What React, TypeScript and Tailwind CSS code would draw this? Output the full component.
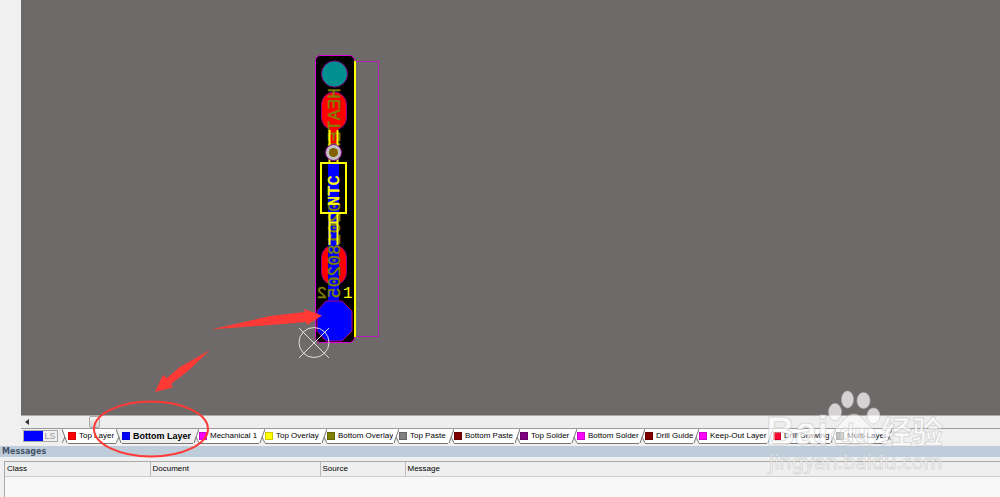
import { useState } from "react";

const layers = [
  { name: "Top Layer", color: "bg-[#ff0000]", width: "w-[54px]" },
  { name: "Bottom Layer", color: "bg-[#0000ff]", width: "w-[77px]" },
  { name: "Mechanical 1", color: "bg-[#ff00ff]", width: "w-[66px]" },
  { name: "Top Overlay", color: "bg-[#ffff00]", width: "w-[62px]" },
  { name: "Bottom Overlay", color: "bg-[#808000]", width: "w-[72px]" },
  { name: "Top Paste", color: "bg-[#808080]", width: "w-[55px]" },
  { name: "Bottom Paste", color: "bg-[#800000]", width: "w-[66px]" },
  { name: "Top Solder", color: "bg-[#800080]", width: "w-[57px]" },
  { name: "Bottom Solder", color: "bg-[#ff00ff]", width: "w-[68px]" },
  { name: "Drill Guide", color: "bg-[#800000]", width: "w-[54px]" },
  { name: "Keep-Out Layer", color: "bg-[#ff00ff]", width: "w-[74px]" },
  { name: "Drill Drawing", color: "bg-[#ff0033]", width: "w-[63px]" },
  { name: "Multi-Layer", color: "bg-[#808080]", width: "w-[56px]" },
];

function TabEdge({ left, right, slant }: { left: string; right: string; slant: "rise" | "fall" }) {
  return (
    <svg width="6" height="15" viewBox="0 0 6 15" className="shrink-0" aria-hidden="true">
      {slant === "rise" ? (
        <>
          <path d="M0 0H6L1 14H0Z" fill={left} />
          <path d="M6 0V14L3 8Z" fill={right} />
          <path d="M6 0L1 14M3 8L6 14" fill="none" stroke="#777" />
        </>
      ) : (
        <>
          <path d="M0 0L3 8L0 14Z" fill={left} />
          <path d="M0 0H6V14H5Z" fill={right} />
          <path d="M0 0L5 14M3 8L0 14" fill="none" stroke="#777" />
        </>
      )}
    </svg>
  );
}

function Board() {
  return (
    <svg
      width="120"
      height="320"
      viewBox="290 45 120 320"
      className="absolute top-[45px] left-[269px]"
      role="img"
      aria-label="Circuit board"
    >
      <path d="M355 61.500H378.500V336.500H355" fill="none" stroke="#b51fb8" />
      <rect x="315.500" y="55.500" width="39" height="287" rx="5" fill="#000" stroke="#e000e0" />
      <circle cx="334.500" cy="74" r="13" fill="#009090" stroke="#800080" />
      <rect x="321.500" y="92" width="25" height="38" rx="12.500" fill="#f00" stroke="#900090" />
      <rect x="321.500" y="245" width="25" height="40" rx="12.500" fill="#f00" stroke="#900090" />
      <path d="M329 128H338V150H329Z" fill="#f00" />
      <path d="M328 162H339V303H328Z" fill="#00f" />
      <path d="M326 301H342L352 311V331L342 341H326L317 331V311Z" fill="#00f" stroke="#b00070" />
      {/* bottom side silkscreen reads mirrored */}
      <g fill="#808000" stroke="#808000" strokeWidth="0.400" fontFamily="Liberation Mono, monospace">
        <text transform="matrix(0 1 1 0 340 88)" fontSize="18">HEATER</text>
        <text transform="matrix(0 1 1 0 340 201)" fontSize="18">020180205</text>
        <text transform="matrix(-1 0 0 1 327 298)" fontSize="17">2</text>
      </g>
      <path d="M329.500 130V162M337.500 130V162M329.500 214V245M337.500 214V245M329 222.500H338" stroke="#ff0" strokeWidth="2" />
      <rect x="321" y="163" width="25" height="50" fill="none" stroke="#ff0" strokeWidth="2" />
      <text
        transform="rotate(-90 339 206)"
        x="339"
        y="206"
        fontSize="17"
        fontFamily="Liberation Mono, monospace"
        fill="#ff0"
        stroke="#ff0"
        strokeWidth="0.500"
      >
        NTC
      </text>
      <text x="343" y="298" fontSize="16" fontFamily="Liberation Mono, monospace" fill="#ff0">1</text>
      <path d="M355 61V337" stroke="#ff0" strokeWidth="2" />
      <circle cx="333.500" cy="152.500" r="8" fill="#c0c0c0" stroke="#900090" />
      <circle cx="333.500" cy="152.500" r="4.500" fill="#806000" />
      <g fill="none" stroke="#e0e0e0">
        <circle cx="314" cy="342.500" r="15" />
        <path d="M299 328L329 358M329 328L299 358" />
      </g>
    </svg>
  );
}

function Annotations() {
  return (
    <svg
      width="250"
      height="170"
      viewBox="80 300 250 170"
      className="pointer-events-none absolute top-[300px] left-[80px]"
      aria-hidden="true"
    >
      <path d="M211 329.500L270 316L305 312L304 309L322 315.500L307 325L306 322L270 325Z" fill="#ff3a36" />
      <path d="M210 350L180 367L167 378L163 375L155 392L173 387.500L171 384L188 371Z" fill="#ff3a36" />
      <ellipse cx="151" cy="429" rx="57" ry="27.500" fill="none" stroke="#ff3a36" strokeWidth="2" />
    </svg>
  );
}

function Watermark() {
  return (
    <svg
      width="200"
      height="100"
      viewBox="760 380 200 100"
      className="pointer-events-none absolute top-[380px] right-[40px]"
      role="img"
      aria-label="Baidu"
    >
      <g fill="#fff" fillOpacity="0.700" stroke="#bbb" strokeOpacity="0.500">
        <ellipse cx="835" cy="412" rx="6.500" ry="8.500" />
        <ellipse cx="847.500" cy="399.500" rx="6" ry="8.500" />
        <ellipse cx="863.500" cy="400.500" rx="6.500" ry="8" />
        <ellipse cx="873.500" cy="416" rx="6.500" ry="8" />
        <path
          d="M854 414C861 414 864 422 871 427C880 434 877 446 866 446C861 446 858 444 854 444C849 444 846 446 841 446C831 446 828 435 836 428C843 422 847 414 854 414Z"
          fillOpacity="0.500"
        />
        <text x="766" y="445" fontSize="40" fontWeight="700" fontFamily="Liberation Sans, sans-serif">Bai</text>
        <text x="881" y="443" fontSize="31" fontWeight="700" fontFamily="Noto Sans CJK SC, sans-serif">经验</text>
        <text x="769" y="469" fontSize="20" fontFamily="Noto Sans, sans-serif">jingyan.baidu.com</text>
        <text x="839" y="442" fontSize="25" fontWeight="700" fontFamily="Liberation Sans, sans-serif" fillOpacity="0.300">du</text>
      </g>
    </svg>
  );
}

export default function App() {
  const [active, setActive] = useState("Bottom Layer");
  const fill = (name?: string) => (!name || name === active ? "#f0f0f0" : "#fff");

  return (
    <div className="relative flex h-screen flex-col overflow-hidden bg-[#f0f0f0] font-['Liberation_Sans',sans-serif] text-[8px] leading-[12px] text-black">
      <main className="ml-[21px] flex min-h-0 flex-1 flex-col">
        <div className="relative min-h-0 flex-1 overflow-hidden border-b border-[#aaa] bg-[#6e6a69]">
          <Board />
        </div>

        <div className="flex h-3 shrink-0 items-center bg-[#eeeeee]">
          <button type="button" aria-label="Scroll left" className="flex h-3 w-3 items-center justify-center">
            <svg width="4" height="6" viewBox="0 0 4 6" aria-hidden="true">
              <path d="M4 0V6L0 3Z" fill="#333" />
            </svg>
          </button>
          <button
            type="button"
            aria-label="Scroll position"
            className="ml-14 h-3 w-[11px] rounded-xs border border-[#aaa] bg-linear-to-b from-[#f7f7f7] to-[#d0d0d0]"
          />
        </div>

        <div className="flex h-[18px] shrink-0 items-start border-t border-[#999]">
          <button
            type="button"
            className="mt-px mr-1 ml-0.5 flex h-3 w-[35px] shrink-0 border border-[#aaa] text-[9px] leading-[10px] text-[#999]"
          >
            <span className="h-full w-[19px] bg-[#0000ff]" />
            <span className="flex-1 text-center">LS</span>
          </button>
          <div role="tablist" className="flex">
            {layers.map((layer, i) => {
              const selected = layer.name === active;
              return (
                <button
                  key={layer.name}
                  type="button"
                  role="tab"
                  aria-selected={selected}
                  onClick={() => setActive(layer.name)}
                  className={`flex h-[15px] shrink-0 ${layer.width}`}
                >
                  <TabEdge
                    left={fill(layers[i - 1]?.name)}
                    right={fill(layer.name)}
                    slant={i === 0 || selected ? "fall" : "rise"}
                  />
                  <span
                    className={`flex h-[15px] flex-1 items-center border-b border-[#777] whitespace-nowrap ${
                      selected ? "bg-[#f0f0f0] text-[9px] font-bold" : "bg-white"
                    }`}
                  >
                    <span className={`mr-[3px] h-2 w-2 shrink-0 border border-black/20 ${layer.color}`} />
                    <span className="w-0">{layer.name}</span>
                  </span>
                </button>
              );
            })}
            <TabEdge left="#fff" right="#f0f0f0" slant="rise" />
          </div>
        </div>
      </main>

      <section className="shrink-0">
        <h2 className="h-[11px] bg-[#bfccda] pl-0.5 font-['DejaVu_Sans',sans-serif] leading-[11px] font-bold text-[#44546a]">
          Messages
        </h2>
        <div className="mt-1 ml-1 h-9 border-t border-l border-[#aaa] bg-[#f8f8f8]">
          <table className="w-full table-fixed border-collapse text-left">
            <thead>
              <tr className="h-[14px] border-b border-[#ccc] bg-[#efefef]">
                <th className="w-[145px] pl-0.5 font-normal">Class</th>
                <th className="w-[170px] border-l border-[#bbb] pl-0.5 font-normal">Document</th>
                <th className="w-[85px] border-l border-[#bbb] pl-0.5 font-normal">Source</th>
                <th className="border-l border-[#bbb] pl-0.5 font-normal">Message</th>
              </tr>
            </thead>
          </table>
        </div>
      </section>

      <Annotations />
      <Watermark />
    </div>
  );
}
